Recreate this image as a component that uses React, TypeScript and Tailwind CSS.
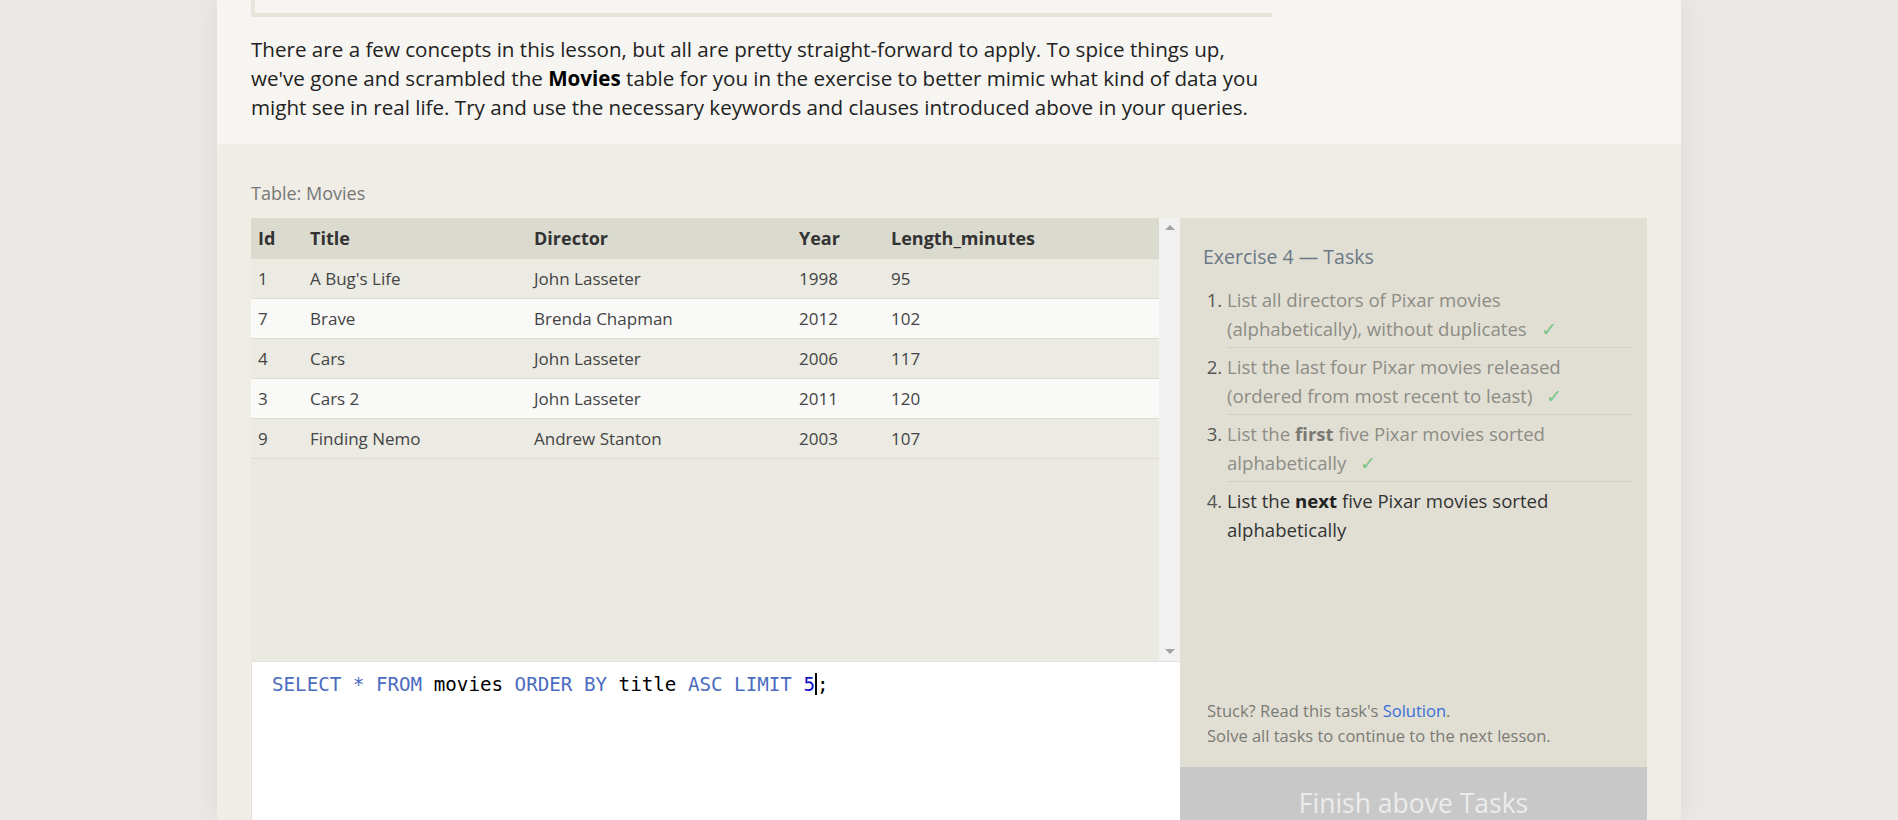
import React from 'react';

const rows = [
  { id: 1, title: "A Bug's Life", director: 'John Lasseter', year: 1998, length: 95 },
  { id: 7, title: 'Brave', director: 'Brenda Chapman', year: 2012, length: 102 },
  { id: 4, title: 'Cars', director: 'John Lasseter', year: 2006, length: 117 },
  { id: 3, title: 'Cars 2', director: 'John Lasseter', year: 2011, length: 120 },
  { id: 9, title: 'Finding Nemo', director: 'Andrew Stanton', year: 2003, length: 107 },
];

const cols = 'grid grid-cols-[52px_224px_265px_92px_1fr]';

function Check() {
  return <span className="ml-[14px] text-[#78c487]">✓</span>;
}

export default function App() {
  return (
    <div className="h-[820px] w-full overflow-hidden bg-[#ece8e5] flex justify-center font-['Open_Sans',sans-serif]">
      <div className="w-[1464px] shrink-0 bg-[#f6f5f1] shadow-[0_0_28px_rgba(0,0,0,0.07)] flex flex-col">
        {/* Lesson text */}
        <div className="px-[34px] pb-[22px]">
          <div className="w-[1021px] h-[17px] border-l-4 border-b-4 border-[#e6e5da]" />
          <p className="mt-[18px] w-[1021px] text-[20.6px] leading-[29px] text-[#222]">
            There are a few concepts in this lesson, but all are pretty straight-forward to apply. To spice things up,
            we've gone and scrambled the <strong className="font-bold text-black">Movies</strong> table for you in the exercise to better mimic what kind of data you
            might see in real life. Try and use the necessary keywords and clauses introduced above in your queries.
          </p>
        </div>

        {/* Exercise */}
        <div className="flex-1 bg-[#efede6] rounded-t-[4px] px-[34px] pt-[36px]">
          <div className="text-[18px] leading-[26px] text-[#777] mb-[12px]">Table: Movies</div>
          <div className="flex h-[620px]">
            {/* Left: table + editor */}
            <div className="w-[929px] flex flex-col">
              <div className="h-[443px] flex bg-[#eae9e2]">
                <div className="flex-1">
                  <div className={`${cols} h-[41px] items-center bg-[#dbdacf] text-[18px] font-bold text-[#333]`}>
                    <div className="px-[7px]">Id</div>
                    <div className="px-[7px]">Title</div>
                    <div className="px-[7px]">Director</div>
                    <div className="px-[7px]">Year</div>
                    <div className="px-[7px]">Length_minutes</div>
                  </div>
                  {rows.map((r, i) => (
                    <div
                      key={r.id}
                      className={`${cols} h-[40px] items-center border-b border-[#dedcd5] text-[17px] text-[#444] ${
                        i % 2 === 0 ? 'bg-[#ebeae3]' : 'bg-[#f9f9f8]'
                      }`}
                    >
                      <div className="px-[7px]">{r.id}</div>
                      <div className="px-[7px]">{r.title}</div>
                      <div className="px-[7px]">{r.director}</div>
                      <div className="px-[7px]">{r.year}</div>
                      <div className="px-[7px]">{r.length}</div>
                    </div>
                  ))}
                </div>
                {/* scrollbar */}
                <div className="w-[21px] bg-[#f1f1f1] flex flex-col items-center justify-between py-[7px]">
                  <div className="w-0 h-0 border-l-[5px] border-r-[5px] border-b-[5px] border-l-transparent border-r-transparent border-b-[#a3a3a3]" />
                  <div className="w-0 h-0 border-l-[5px] border-r-[5px] border-t-[5px] border-l-transparent border-r-transparent border-t-[#a3a3a3]" />
                </div>
              </div>
              {/* editor */}
              <div className="flex-1 bg-white border-t border-[#e2e1da] border-l border-l-[#e4e2da] px-[20px] pt-[9px]">
                <div className="font-['DejaVu_Sans_Mono',monospace] text-[19.2px] leading-[28px] whitespace-pre">
                  <span className="text-[#4a6cc0]">SELECT</span>
                  <span className="text-[#4a6cc0]"> * </span>
                  <span className="text-[#4a6cc0]">FROM</span>
                  <span className="text-black"> movies </span>
                  <span className="text-[#4a6cc0]">ORDER BY</span>
                  <span className="text-black"> title </span>
                  <span className="text-[#4a6cc0]">ASC LIMIT</span>{' '}
                  <span className="text-[#1010c8]">5</span>
                  <span className="inline-block w-[2px] h-[22px] bg-black align-[-4px]" />
                  <span className="text-black">;</span>
                </div>
              </div>
            </div>

            {/* Right: tasks */}
            <div className="w-[467px] flex flex-col">
              <div className="h-[549px] bg-[#e1dfd4] flex flex-col pl-[23px] pr-[13px] pt-[26px] pb-[19px]">
                <h3 className="text-[19.5px] leading-[26px] text-[#6b7886]">Exercise 4 — Tasks</h3>
                <ol className="mt-[15px] pl-[24px] list-decimal text-[18.6px] leading-[29px] text-[#8d8c85] marker:text-[#555]">
                  <li className="pb-[4px] border-b border-[#d3d1c6]">
                    List all directors of Pixar movies (alphabetically), without duplicates
                    <Check />
                  </li>
                  <li className="py-[4px] border-b border-[#d3d1c6]">
                    List the last four Pixar movies released (ordered from most recent to least)
                    <Check />
                  </li>
                  <li className="py-[4px] border-b border-[#d3d1c6]">
                    List the <strong className="font-bold text-[#7a7973]">first</strong> five Pixar movies sorted alphabetically
                    <Check />
                  </li>
                  <li className="py-[4px] text-[#333] marker:text-[#333]">
                    List the <strong className="font-bold text-[#222]">next</strong> five Pixar movies sorted alphabetically
                  </li>
                </ol>
                <div className="mt-auto pl-[4px] text-[16.5px] leading-[25px] text-[#7b7a74]">
                  <div>
                    Stuck? Read this task's <a className="text-[#3a6fd8]">Solution</a>.
                  </div>
                  <div>Solve all tasks to continue to the next lesson.</div>
                </div>
              </div>
              <div className="flex-1 bg-[#c8c8c8] text-center pt-[17px] text-[26.5px] leading-[38px] text-[#ececec]">
                Finish above Tasks
              </div>
            </div>
          </div>
        </div>
      </div>
    </div>
  );
}
